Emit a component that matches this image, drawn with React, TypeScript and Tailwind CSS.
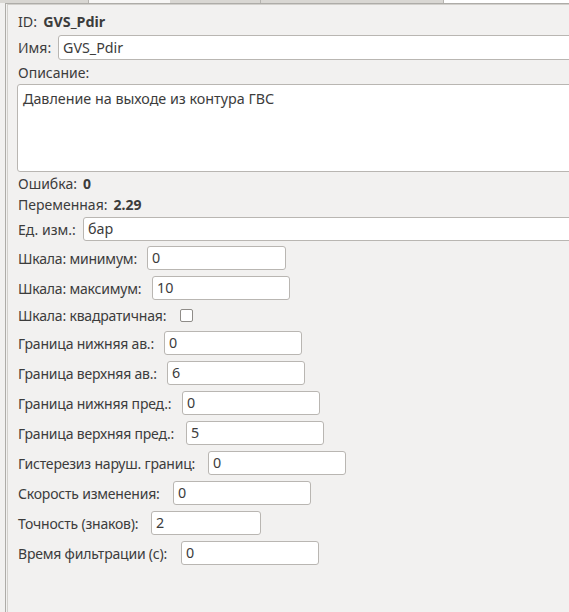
// Свойства тега — форма параметров сигнала (Qt/Ubuntu look).

const font = { fontFamily: '"Noto Sans", "DejaVu Sans", sans-serif' }

interface FieldRow {
  label: string
  value: string
  labelW: string
  inputW: string
}

const rows: FieldRow[] = [
  { label: "Граница нижняя ав.:", value: "0", labelW: "w-[146px]", inputW: "w-[138px]" },
  { label: "Граница верхняя ав.:", value: "6", labelW: "w-[149px]", inputW: "w-[138px]" },
  { label: "Граница нижняя пред.:", value: "0", labelW: "w-[164px]", inputW: "w-[138px]" },
  { label: "Граница верхняя пред.:", value: "5", labelW: "w-[168px]", inputW: "w-[138px]" },
  { label: "Гистерезиз наруш. границ:", value: "0", labelW: "w-[190px]", inputW: "w-[138px]" },
  { label: "Скорость изменения:", value: "0", labelW: "w-[155px]", inputW: "w-[138px]" },
  { label: "Точность (знаков):", value: "2", labelW: "w-[133px]", inputW: "w-[110px]" },
  { label: "Время фильтрации (с):", value: "0", labelW: "w-[163px]", inputW: "w-[138px]" },
]

function TextInput({ value, className }: { value: string; className?: string }) {
  return (
    <div className={`h-[24px] shrink-0 bg-white border border-[#b9b6b2] rounded-[3px] flex items-center pl-[4px] text-[14.3px] text-[#3c3c3c] ${className ?? ""}`}>
      {value}
    </div>
  )
}

export default function App() {
  return (
    <div className="w-[569px] h-[612px] overflow-hidden bg-[#f2f1f0] text-[14px] text-[#3c3c3c]" style={font}>
      {/* tab strip */}
      <div className="flex h-[3px]">
        <div className="w-[89px] bg-[#d9d7d3] border-r border-[#b6b4b0]" />
        <div className="w-[81px] bg-[#f7f6f5]" />
        <div className="w-[91px] bg-[#d9d7d3] border-r border-[#b6b4b0]" />
        <div className="w-[183px] bg-[#d9d7d3] border-r border-[#b6b4b0]" />
        <div className="flex-1 bg-white" />
      </div>

      <div className="ml-[5px] h-[609px] border-l border-t border-[#aeaca8]">
        <div className="h-full ml-[1px] border-l border-t border-[#d2d0cc] pl-[10px] flex flex-col">
          <div className="h-[30px] flex items-end pb-[3px] gap-[6px] text-[14.3px]">
            <span>ID:</span>
            <span className="font-bold">GVS_Pdir</span>
          </div>

          <div className="flex items-center h-[25px]">
            <span className="w-[40px] shrink-0">Имя:</span>
            <TextInput value="GVS_Pdir" className="w-[560px] h-[25px]" />
          </div>

          <div className="h-[24px] flex items-center">Описание:</div>

          <div className="-ml-[1px] h-[88px] w-[560px] shrink-0 bg-white border border-[#b9b6b2] rounded-[3px] pl-[5px] pt-[3px] text-[14.3px]">
            Давление на выходе из контура ГВС
          </div>

          <div className="h-[22px] flex items-center gap-[6px]">
            <span>Ошибка:</span>
            <span className="font-bold">0</span>
          </div>
          <div className="h-[20px] flex items-center gap-[6px]">
            <span>Переменная:</span>
            <span className="font-bold">2.29</span>
          </div>

          <div className="flex items-center h-[24px] mt-[3px]">
            <span className="w-[65px] shrink-0">Ед. изм.:</span>
            <TextInput value="бар" className="w-[500px]" />
          </div>

          <div className="flex items-center h-[30px] mt-[2px] tracking-[-0.2px]">
            <span className="w-[129px] shrink-0">Шкала: минимум:</span>
            <TextInput value="0" className="w-[139px] tracking-normal" />
          </div>
          <div className="flex items-center h-[30px] tracking-[-0.2px]">
            <span className="w-[134px] shrink-0">Шкала: максимум:</span>
            <TextInput value="10" className="w-[138px] tracking-normal" />
          </div>

          <div className="flex items-center h-[25px] tracking-[-0.2px]">
            <span className="w-[162px] shrink-0">Шкала: квадратичная:</span>
            <div className="w-[13px] h-[13px] bg-white border border-[#8f8c88] rounded-[2px]" />
          </div>

          {rows.map(r => (
            <div key={r.label} className="flex items-center h-[30px] shrink-0">
              <span className={`${r.labelW} shrink-0 tracking-[-0.2px]`}>{r.label}</span>
              <TextInput value={r.value} className={r.inputW} />
            </div>
          ))}
        </div>
      </div>
    </div>
  )
}
